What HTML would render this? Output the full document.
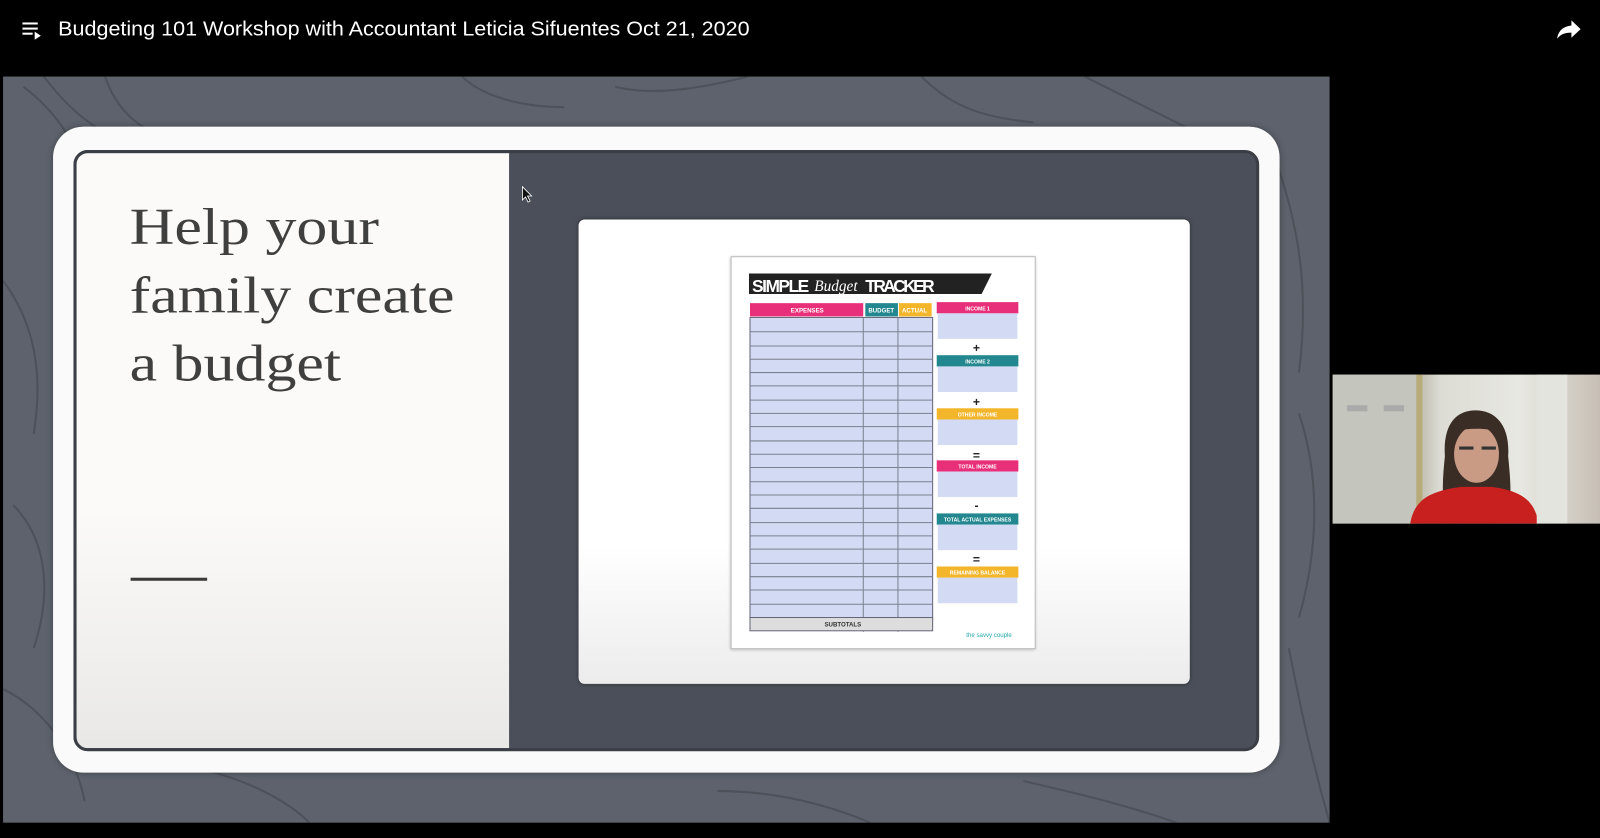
<!DOCTYPE html>
<html><head><meta charset="utf-8"><style>
*{margin:0;padding:0;box-sizing:border-box}
body{width:1600px;height:838px;background:#000;overflow:hidden;font-family:"Liberation Sans",sans-serif}
#w{position:absolute;left:0;top:0;width:1568px;height:821px;transform:scale(1.0204,1.0207);transform-origin:0 0}
.a{position:absolute}
.title{left:57px;top:18px;color:#fff;font-size:20px;white-space:nowrap;transform:scaleX(1.055);transform-origin:0 0}
.slide{left:3px;top:75px;width:1300px;height:731px;background:#5d626c;overflow:hidden}
.frame{left:52px;top:124px;width:1202px;height:633px;background:#fafafa;border-radius:30px;box-shadow:0 0 6px rgba(0,0,0,.3)}
.dark{left:72px;top:147px;width:1162px;height:589px;background:#4b4f59;border-radius:14px;border:3px solid #3b3e45}
.left{left:72px;top:147px;width:427px;height:589px;background:linear-gradient(#fbfaf8 60%,#e9e8e6);border:3px solid #3b3e45;border-right:none;border-radius:14px 0 0 14px}
.h{left:127px;top:190px;font-family:"Liberation Serif",serif;font-size:51px;line-height:67px;color:#3f3f3f;transform:scaleX(1.19);transform-origin:0 0;white-space:nowrap}
.card{left:567px;top:215px;width:599px;height:455px;background:linear-gradient(#fff 70%,#ececec);border-radius:6px;box-shadow:0 0 4px rgba(0,0,0,.4)}
.paper{left:716px;top:251px;width:299px;height:385px;background:#fff;border:1px solid #bbb;box-shadow:0 1px 3px rgba(0,0,0,.3)}
.cam{left:1306px;top:367px;width:262px;height:146px;background:linear-gradient(90deg,#c9c9c2 0,#d6d5ce 30%,#bdb9a8 32%,#dcdcd5 40%,#e8e8e2 70%,#c7bfb5 100%)}
</style></head><body><div id="w">
<svg class="a" style="left:20px;top:18px" width="24" height="24" viewBox="0 0 24 24" fill="#fff"><rect x="2" y="4" width="15" height="2"/><rect x="2" y="9" width="15" height="2"/><rect x="2" y="14" width="10" height="2"/><path d="M14 13v8l6-4z"/></svg>
<div class="a title">Budgeting 101 Workshop with Accountant Leticia Sifuentes Oct 21, 2020</div>
<svg class="a" style="left:1524px;top:17px" width="28" height="24" viewBox="0 0 28 24"><path d="M16 3v5C7 9 3 14 2 21c3-4 7-6 14-6v5l9-8.5z" fill="#fff"/></svg>
<div class="a slide"><svg width="1300" height="731" style="position:absolute;left:0;top:0" fill="none" stroke="#474b53" stroke-width="2" opacity=".7">
<path d="M20 10c40 30 60 70 70 120M40 0c30 40 60 60 100 70M0 200c30 40 40 90 30 150M10 420c30 30 40 80 20 140M0 600c40 20 70 60 80 110M200 680c40 10 80 30 100 51M450 0c20 20 60 30 100 30M600 10c40 10 90 0 130-10M900 0c30 30 60 40 110 45M1060 0c40 20 80 40 100 50M1250 90c20 60 30 120 20 200M1270 330c20 60 20 130 0 200M1260 560c10 50 20 100 40 171M700 700c50 0 100 10 150 31M1000 690c40 10 90 20 150 41M100 0c10 30 30 50 60 60"/></svg></div>
<div class="a frame"></div>
<div class="a dark"></div>
<div class="a left"></div>
<div class="a h">Help your<br>family create<br>a budget</div>
<div class="a" style="left:128px;top:566px;width:75px;height:3px;background:#3a3a3a"></div>
<svg class="a" style="left:511px;top:182px" width="12" height="18" viewBox="0 0 12 18"><path d="M1 1v13l3-3 2.5 5 2-1-2.5-5h4z" fill="#111" stroke="#fff" stroke-width=".8"/></svg>
<div class="a card"></div>
<div class="a paper"></div>
<svg class="a" style="left:716px;top:251px" width="299" height="385" viewBox="716 251 299 385">
<path d="M734 268h238l-10 20H734z" fill="#222"/>
<text x="737" y="286" fill="#fff" font-family="Liberation Sans" font-weight="bold" font-size="17" textLength="56">SIMPLE</text>
<text x="798" y="285" fill="#fff" font-family="Liberation Serif" font-style="italic" font-size="15">Budget</text>
<text x="848" y="286" fill="#fff" font-family="Liberation Sans" font-weight="bold" font-size="17" textLength="68">TRACKER</text>
<rect x="735" y="297" width="111" height="13" fill="#e8307a"/><rect x="848" y="297" width="32" height="13" fill="#22878f"/><rect x="881" y="297" width="32" height="13" fill="#f3b52a"/>
<rect x="735" y="311" width="179" height="297" fill="#d2dbf3" stroke="#667" stroke-width="1"/>
<g stroke="#7a8090" stroke-width="1">
<path d="M735 325h179M735 339h179M735 352h179M735 365h179M735 378h179M735 392h179M735 405h179M735 418h179M735 432h179M735 445h179M735 458h179M735 472h179M735 485h179M735 498h179M735 512h179M735 525h179M735 538h179M735 552h179M735 565h179M735 578h179M735 592h179M735 605h179"/>
<path d="M846 311v308M880 311v308"/></g>
<rect x="735" y="605" width="179" height="13" fill="#ddd" stroke="#667"/>
<text x="808" y="614" font-size="6" fill="#333" font-family="Liberation Sans" font-weight="bold">SUBTOTALS</text>
<g font-family="Liberation Sans" font-size="6" fill="#fff" font-weight="bold">
<text x="775" y="306">EXPENSES</text><text x="851" y="306">BUDGET</text><text x="884" y="306">ACTUAL</text></g>
<g>
<rect x="918" y="296" width="80" height="11" fill="#e8307a"/><rect x="919" y="307" width="78" height="25" fill="#d2dbf3"/>
<rect x="918" y="348" width="80" height="11" fill="#22878f"/><rect x="919" y="359" width="78" height="25" fill="#d2dbf3"/>
<rect x="918" y="400" width="80" height="11" fill="#f3b52a"/><rect x="919" y="411" width="78" height="25" fill="#d2dbf3"/>
<rect x="918" y="451" width="80" height="11" fill="#e8307a"/><rect x="919" y="462" width="78" height="25" fill="#d2dbf3"/>
<rect x="918" y="503" width="80" height="11" fill="#22878f"/><rect x="919" y="514" width="78" height="25" fill="#d2dbf3"/>
<rect x="918" y="555" width="80" height="11" fill="#f3b52a"/><rect x="919" y="566" width="78" height="25" fill="#d2dbf3"/>
</g>
<g font-family="Liberation Sans" font-size="5" fill="#fff" text-anchor="middle" font-weight="bold">
<text x="958" y="304">INCOME 1</text><text x="958" y="356">INCOME 2</text><text x="958" y="408">OTHER INCOME</text><text x="958" y="459">TOTAL INCOME</text><text x="958" y="511">TOTAL ACTUAL EXPENSES</text><text x="958" y="563">REMAINING BALANCE</text></g>
<g font-family="Liberation Sans" font-size="12" fill="#222" text-anchor="middle" font-weight="bold">
<text x="957" y="345">+</text><text x="957" y="398">+</text><text x="957" y="450">=</text><text x="957" y="499">-</text><text x="957" y="552">=</text></g>
<text x="947" y="624" font-size="6" fill="#2aa" font-family="Liberation Sans">the savvy couple</text>
</svg>
<div class="a cam"><svg width="262" height="146" style="position:absolute;left:0;top:0">
<rect x="0" y="0" width="82" height="146" fill="#c4c5bd"/><rect x="14" y="30" width="20" height="6" fill="#aaa"/><rect x="50" y="30" width="20" height="6" fill="#aaa"/>
<rect x="82" y="0" width="6" height="146" fill="#b7ab7a"/>
<path d="M110 80c-2-30 10-45 30-45s34 15 32 45c2 20 4 40 0 66h-60c-6-26-4-46-2-66z" fill="#3a2d26"/>
<ellipse cx="141" cy="78" rx="22" ry="28" fill="#c99a84"/>
<path d="M118 55c10-14 38-16 46 2-14-6-30-4-46-2z" fill="#3a2d26"/>
<path d="M124 72h14M146 72h14" stroke="#333" stroke-width="3"/>
<path d="M76 146c4-24 20-32 50-36h30c30 4 42 14 46 36z" fill="#c8201f"/>
<rect x="200" y="0" width="30" height="146" fill="#e4e4de"/>
</svg></div>
</div></body></html>
